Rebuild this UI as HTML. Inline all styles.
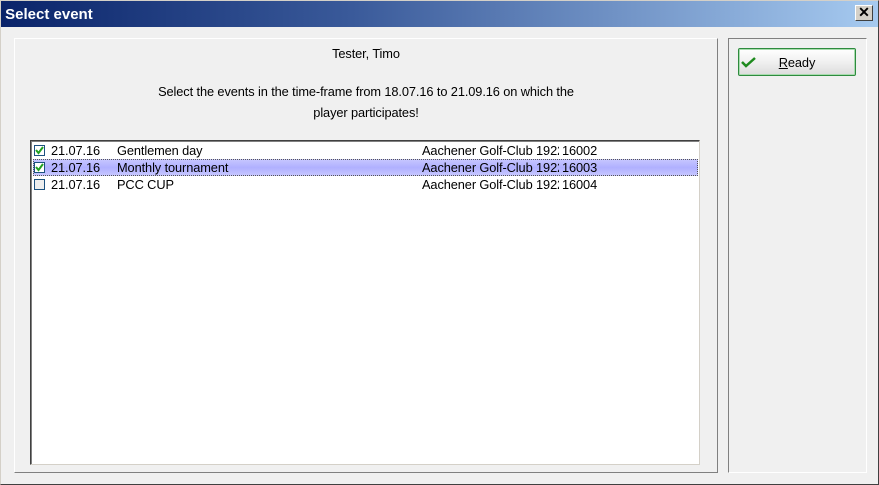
<!DOCTYPE html>
<html><head><style>
body{margin:0;width:879px;height:485px;background:#f0f0f0;font-family:"Liberation Sans",sans-serif;font-size:12.8px;letter-spacing:-0.1px;position:relative;overflow:hidden}
.a{position:absolute}
#win{left:0;top:0;width:877px;height:483px;border:1px solid #d4d0c8;border-right-color:#404040;border-bottom-color:#404040}
#title{left:1px;top:1px;width:877px;height:26px;background:linear-gradient(to right,#0a246a,#3a5a9a 40%,#a6caf0);color:#fff;font-weight:bold;font-size:15px;line-height:28px;letter-spacing:0}
#close{left:855px;top:5px;width:16px;height:14px;background:#d4d0c8;border:1px solid;border-color:#fff #404040 #404040 #fff;font:bold 14px "Liberation Sans";line-height:13px;text-align:center;color:#000}
#lp{left:14px;top:38px;width:702px;height:433px;border:1px solid;border-color:#fff #808080 #808080 #fff}
#rp{left:728px;top:38px;width:137px;height:433px;border:1px solid;border-color:#808080 #fff #fff #808080}
#list{left:30px;top:140px;width:668px;height:323px;background:#fff;border:1px solid;border-color:#404040 #d4d0c8 #d4d0c8 #404040;box-shadow:inset 1px 1px 0 #808080}
.row{position:absolute;left:2px;width:665px;height:17px;line-height:17px;color:#000}
.row span{position:absolute;top:0;white-space:nowrap}
.club{width:137px;overflow:hidden}
.cb{position:absolute;left:1px;top:3px;width:9px;height:9px;border:1px solid #1c5180;background:#fff}
.sel{background:linear-gradient(#c8c8ff,#b0b0ff 50%,#c8c8ff);outline:1px dotted #555;outline-offset:-1px}
#btn{left:738px;top:48px;width:116px;height:26px;border:1px solid #2e8b3e;border-radius:2px;background:linear-gradient(#fff,#f0f0f0 50%,#dcdcdc);box-shadow:inset 0 0 0 1px #a8dcae}
</style></head><body>
<div class="a" id="win"></div>
<div class="a" id="title">&nbsp;Select event</div>
<div class="a" id="close">✕</div>
<div class="a" id="lp"></div>
<div class="a" id="rp"></div>
<div class="a" style="left:14px;width:704px;top:46px;text-align:center">Tester, Timo</div>
<div class="a" style="left:14px;width:704px;top:81px;text-align:center;line-height:21px">Select the events in the time-frame from 18.07.16 to 21.09.16 on which the<br>player participates!</div>
<div class="a" id="list">
<div class="row" style="top:1px"><div class="cb"><svg width="9" height="9" style="position:absolute"><path d="M1 4 L3.5 7 L8 1" stroke="#21a121" stroke-width="2" fill="none"/></svg></div><span style="left:18px">21.07.16</span><span style="left:84px">Gentlemen day</span><span class="club" style="left:389px">Aachener Golf-Club 1922</span><span style="left:529px">16002</span></div>
<div class="row sel" style="top:18px"><div class="cb"><svg width="9" height="9" style="position:absolute"><path d="M1 4 L3.5 7 L8 1" stroke="#21a121" stroke-width="2" fill="none"/></svg></div><span style="left:18px">21.07.16</span><span style="left:84px">Monthly tournament</span><span class="club" style="left:389px">Aachener Golf-Club 1922</span><span style="left:529px">16003</span></div>
<div class="row" style="top:35px"><div class="cb" style="background:#eee"></div><span style="left:18px">21.07.16</span><span style="left:84px">PCC CUP</span><span class="club" style="left:389px">Aachener Golf-Club 1922</span><span style="left:529px">16004</span></div>
</div>
<div class="a" id="btn"><svg class="a" style="left:2px;top:7px" width="16" height="12"><path d="M1 6 L5 10 L14 2" stroke="#1e8a1e" stroke-width="2.5" fill="none"/></svg><div class="a" style="left:0;width:116px;top:6px;text-align:center"><u>R</u>eady</div></div>
</body></html>
